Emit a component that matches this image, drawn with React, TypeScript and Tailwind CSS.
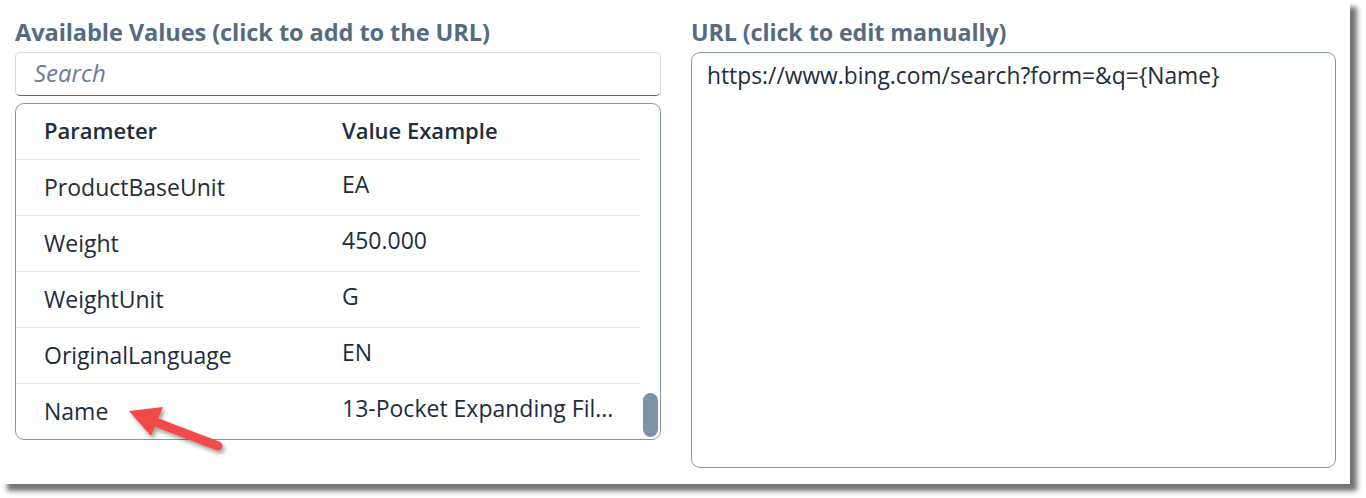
import React from 'react'

const ROWS = [
  { p: 'ProductBaseUnit', v: 'EA' },
  { p: 'Weight', v: '450.000' },
  { p: 'WeightUnit', v: 'G' },
  { p: 'OriginalLanguage', v: 'EN' },
  { p: 'Name', v: '13-Pocket Expanding Fil...' },
]

function Arrow() {
  return (
    <svg className="absolute left-0 top-0 pointer-events-none" width="260" height="480" viewBox="0 0 260 480">
      <defs>
        <filter id="sh" x="-20%" y="-20%" width="150%" height="150%">
          <feDropShadow dx="2" dy="3" stdDeviation="2" floodColor="#000" floodOpacity="0.4" />
        </filter>
      </defs>
      <g filter="url(#sh)">
        <line x1="218" y1="446" x2="150" y2="420" stroke="#f24848" strokeWidth="9" strokeLinecap="round" />
        <polygon points="129,411 163,407 151,436" fill="#f24848" />
      </g>
    </svg>
  )
}

export default function App() {
  return (
    <div className="w-[1366px] h-[498px] bg-white" style={{ fontFamily: '"Open Sans", "Noto Sans", sans-serif' }}>
      <div className="relative w-[1350px] h-[484px] bg-white shadow-[7px_7px_5px_rgba(0,0,0,0.55)] flex gap-[30px] pl-[15px] pr-[14px] pt-[17px]">
        <div className="w-[646px] flex flex-col">
          <h2 className="text-[23.6px] leading-[30px] font-bold text-[#556b82] tracking-[-0.1px]">Available Values (click to add to the URL)</h2>
          <div className="mt-[5px] h-[44px] border border-[#d5dadd] border-b-[#556b82] rounded-[5px] flex items-center px-[18px]">
            <span className="italic text-[24px] leading-[30px] text-[#6a7d8f] -mt-[2px]">Search</span>
          </div>
          <div className="mt-[7px] h-[337px] border border-[#8396a8] rounded-[9px] relative overflow-hidden">
            <div className="pr-[20px]">
              <div className="h-[56px] flex items-center border-b border-[#e5e5e5] text-[22px] font-semibold text-[#1d2d3e]">
                <div className="w-[326px] pl-[28px] -mt-[2px]">Parameter</div>
                <div className="-mt-[2px]">Value Example</div>
              </div>
              {ROWS.map((r, i) => (
                <div key={r.p} className={`h-[56px] flex text-[23px] leading-[30px] text-[#1d2d3e] ${i < ROWS.length - 1 ? 'border-b border-[#e5e5e5]' : ''}`}>
                  <div className="w-[326px] pl-[28px] pt-[12px]">{r.p}</div>
                  <div className="flex-1 min-w-0 pt-[9px] whitespace-nowrap">{r.v}</div>
                </div>
              ))}
            </div>
            <div className="absolute right-[2px] bottom-[2px] w-[15px] h-[44px] rounded-full bg-[#7f93a8]" />
          </div>
        </div>
        <div className="flex-1 flex flex-col">
          <h2 className="text-[23.3px] leading-[30px] font-bold text-[#556b82] tracking-[-0.1px]">URL (click to edit manually)</h2>
          <div className="mt-[5px] h-[416px] border border-[#8396a8] rounded-[9px] px-[15px] pt-[8px] text-[22.8px] leading-[30px] text-[#1d2d3e]">
            https://www.bing.com/search?form=&amp;q={'{Name}'}
          </div>
        </div>
        <Arrow />
      </div>
    </div>
  )
}
